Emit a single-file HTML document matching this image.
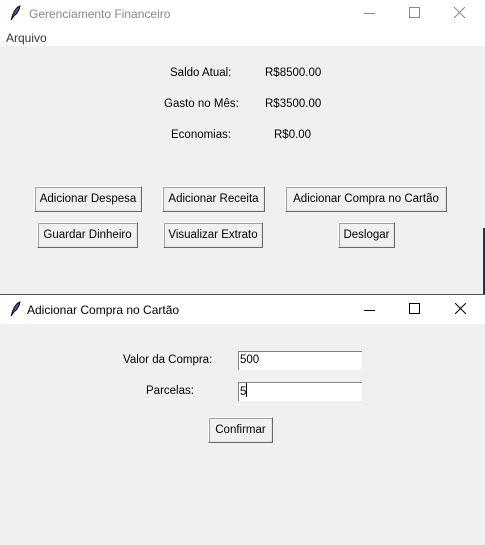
<!DOCTYPE html><html><head><style>
body{margin:0;width:485px;height:545px;position:relative;overflow:hidden;background:#f0f0f0;font-family:"Liberation Sans",sans-serif;font-size:11.5px;color:#000}
.a{position:absolute}
.btn{position:absolute;background:#f0f0f0;border:1px solid;border-color:#fff #696969 #696969 #fff;box-shadow:1px 1px 0 #a0a0a0 inset, -1px -1px 0 #e3e3e3 inset;box-sizing:border-box;text-align:center;line-height:24px;white-space:nowrap}
.ent{position:absolute;background:#fff;border-top:1px solid #828282;border-left:1px solid #828282;box-sizing:border-box;padding-left:1px;line-height:17px}
svg{position:absolute}
</style></head><body>
<div class="a" style="left:0;top:0;width:485px;height:27px;background:#fff"></div>
<div class="a" style="left:0;top:27px;width:485px;height:19px;background:#fff"></div>
<svg style="left:9px;top:5px" width="12" height="16" viewBox="0 0 12 16"><path d="M2 15 L4 9 Q7 2 11 1 Q10 7 5 11 Z" fill="#3a5f9e" stroke="#111" stroke-width="1"/></svg>
<div class="a" style="left:29px;top:7px;color:#888;font-size:12px">Gerenciamento Financeiro</div>
<div class="a" style="left:364px;top:13px;width:11px;height:1px;background:#888"></div>
<div class="a" style="left:409px;top:7px;width:9px;height:9px;border:1px solid #888"></div>
<svg style="left:454px;top:7px" width="11" height="11"><path d="M0 0L11 11M11 0L0 11" stroke="#888" stroke-width="1"/></svg>
<div class="a" style="left:6px;top:31px;color:#333;font-size:12px">Arquivo</div>
<div class="a" style="left:483px;top:228px;width:2px;height:66px;background:#2a3440"></div>
<div class="a" style="left:170px;top:67px">Saldo Atual:</div><div class="a" style="left:265px;top:67px">R$8500.00</div>
<div class="a" style="left:164px;top:98px">Gasto no Mês:</div><div class="a" style="left:265px;top:98px">R$3500.00</div>
<div class="a" style="left:171px;top:129px">Economias:</div><div class="a" style="left:274px;top:129px">R$0.00</div>
<div class="btn" style="left:34px;top:186px;width:108px;height:26px">Adicionar Despesa</div>
<div class="btn" style="left:162px;top:186px;width:103px;height:26px">Adicionar Receita</div>
<div class="btn" style="left:285px;top:186px;width:162px;height:26px">Adicionar Compra no Cartão</div>
<div class="btn" style="left:37px;top:222px;width:101px;height:26px">Guardar Dinheiro</div>
<div class="btn" style="left:163px;top:222px;width:100px;height:26px">Visualizar Extrato</div>
<div class="btn" style="left:338px;top:222px;width:57px;height:26px">Deslogar</div>
<div class="a" style="left:0;top:294px;width:485px;height:1px;background:#555"></div>
<div class="a" style="left:0;top:295px;width:485px;height:29px;background:#fff"></div>
<svg style="left:9px;top:301px" width="12" height="16" viewBox="0 0 12 16"><path d="M2 15 L4 9 Q7 2 11 1 Q10 7 5 11 Z" fill="#3a5f9e" stroke="#111" stroke-width="1"/></svg>
<div class="a" style="left:27px;top:303px;font-size:12px">Adicionar Compra no Cartão</div>
<div class="a" style="left:364px;top:310px;width:11px;height:1px;background:#000"></div>
<div class="a" style="left:409px;top:303px;width:9px;height:9px;border:1px solid #000"></div>
<svg style="left:455px;top:303px" width="11" height="11"><path d="M0 0L11 11M11 0L0 11" stroke="#000" stroke-width="1"/></svg>
<div class="a" style="left:123px;top:354px">Valor da Compra:</div>
<div class="ent" style="left:238px;top:351px;width:124px;height:19px">500</div>
<div class="a" style="left:146px;top:385px">Parcelas:</div>
<div class="ent" style="left:238px;top:382px;width:124px;height:19px">5<span style="display:inline-block;width:1px;height:14px;background:#000;vertical-align:-2px"></span></div>
<div class="btn" style="left:208px;top:417px;width:65px;height:26px">Confirmar</div>
</body></html>
